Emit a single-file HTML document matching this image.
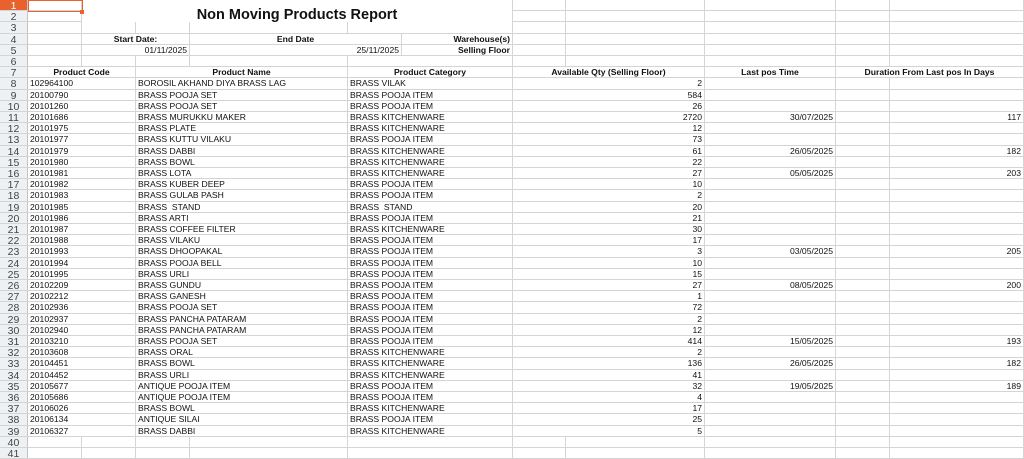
<!DOCTYPE html>
<html><head><meta charset="utf-8"><style>
*{margin:0;padding:0;box-sizing:border-box}
body{width:1024px;height:452px;overflow:hidden;background:#fff;font-family:"Liberation Sans",Arial,sans-serif;font-size:8.6px;color:#111;position:relative}
.row{position:absolute;left:0;width:1024px;height:11.2px;border-bottom:1px solid #d4d4d4}
.c{position:absolute;top:0;height:100%;line-height:11px;white-space:nowrap;overflow:hidden;border-right:1px solid #d4d4d4;padding:0 2px}
.h{left:0;width:28px;background:#eef1f4;color:#444;text-align:center;font-size:10.5px;line-height:12px;border-right:1px solid #c4c4c4}
.r{text-align:right}
.b{font-weight:bold;text-align:center}
</style></head><body>
<div id="g"></div>
<script>
const H=11.2;
const data=[
["102964100","BOROSIL AKHAND DIYA BRASS LAG","BRASS VILAK","2","",""],
["20100790","BRASS POOJA SET","BRASS POOJA ITEM","584","",""],
["20101260","BRASS POOJA SET","BRASS POOJA ITEM","26","",""],
["20101686","BRASS MURUKKU MAKER","BRASS KITCHENWARE","2720","30/07/2025","117"],
["20101975","BRASS PLATE","BRASS KITCHENWARE","12","",""],
["20101977","BRASS KUTTU VILAKU","BRASS POOJA ITEM","73","",""],
["20101979","BRASS DABBI","BRASS KITCHENWARE","61","26/05/2025","182"],
["20101980","BRASS BOWL","BRASS KITCHENWARE","22","",""],
["20101981","BRASS LOTA","BRASS KITCHENWARE","27","05/05/2025","203"],
["20101982","BRASS KUBER DEEP","BRASS POOJA ITEM","10","",""],
["20101983","BRASS GULAB PASH","BRASS POOJA ITEM","2","",""],
["20101985","BRASS&nbsp; STAND","BRASS&nbsp; STAND","20","",""],
["20101986","BRASS ARTI","BRASS POOJA ITEM","21","",""],
["20101987","BRASS COFFEE FILTER","BRASS KITCHENWARE","30","",""],
["20101988","BRASS VILAKU","BRASS POOJA ITEM","17","",""],
["20101993","BRASS DHOOPAKAL","BRASS POOJA ITEM","3","03/05/2025","205"],
["20101994","BRASS POOJA BELL","BRASS POOJA ITEM","10","",""],
["20101995","BRASS URLI","BRASS POOJA ITEM","15","",""],
["20102209","BRASS GUNDU","BRASS POOJA ITEM","27","08/05/2025","200"],
["20102212","BRASS GANESH","BRASS POOJA ITEM","1","",""],
["20102936","BRASS POOJA SET","BRASS POOJA ITEM","72","",""],
["20102937","BRASS PANCHA PATARAM","BRASS POOJA ITEM","2","",""],
["20102940","BRASS PANCHA PATARAM","BRASS POOJA ITEM","12","",""],
["20103210","BRASS POOJA SET","BRASS POOJA ITEM","414","15/05/2025","193"],
["20103608","BRASS ORAL","BRASS KITCHENWARE","2","",""],
["20104451","BRASS BOWL","BRASS KITCHENWARE","136","26/05/2025","182"],
["20104452","BRASS URLI","BRASS KITCHENWARE","41","",""],
["20105677","ANTIQUE POOJA ITEM","BRASS POOJA ITEM","32","19/05/2025","189"],
["20105686","ANTIQUE POOJA ITEM","BRASS POOJA ITEM","4","",""],
["20106026","BRASS BOWL","BRASS KITCHENWARE","17","",""],
["20106134","ANTIQUE SILAI","BRASS POOJA ITEM","25","",""],
["20106327","BRASS DABBI","BRASS KITCHENWARE","5","",""]];
function cell(l,w,t,cls){return `<div class="c ${cls||''}" style="left:${l}px;width:${w}px">${t||''}</div>`}
const blank=[[28,54],[82,54],[136,54],[190,158],[348,165],[513,53],[566,139],[705,131],[836,54],[890,134]];
let out='';
for(let i=1;i<=41;i++){
 let s='';
 if(i==1||i==2){
   s+=cell(28,54,'');
   if(i==1) s+=`<div class="c b" style="left:82px;width:431px;height:22.4px;font-size:14.5px;line-height:16px;padding-top:7px;top:0;background:#fff;z-index:2">Non Moving Products Report</div>`;
   [[513,53],[566,139],[705,131],[836,54],[890,134]].forEach(b=>s+=cell(b[0],b[1],''));
 } else if(i==4||i==5){
   s+=cell(28,54,'');
   s+=cell(82,108,i==4?'Start Date:':'01/11/2025',i==4?'b':'r');
   s+=cell(190,212,i==4?'End Date':'25/11/2025',i==4?'b':'r');
   s+=cell(402,111,i==4?'Warehouse(s)':'Selling Floor','r" style="left:402px;width:111px;font-weight:bold');
   [[513,53],[566,139],[705,131],[836,54],[890,134]].forEach(b=>s+=cell(b[0],b[1],''));
 } else if(i==7){
   s+=cell(28,108,'Product Code','b');s+=cell(136,212,'Product Name','b');s+=cell(348,165,'Product Category','b');
   s+=cell(513,192,'Available Qty (Selling Floor)','b');s+=cell(705,131,'Last pos Time','b');s+=cell(836,188,'Duration From Last pos In Days','b');
 } else if(i>=8&&i<=39){
   const d=data[i-8];
   s+=cell(28,108,d[0]);s+=cell(136,212,d[1]);s+=cell(348,165,d[2]);
   s+=cell(513,192,d[3],'r');s+=cell(705,131,d[4],'r');s+=cell(836,54,'');s+=cell(890,134,d[5],'r');
 } else {
   blank.forEach(b=>s+=cell(b[0],b[1],''));
 }
 let hs=i==1?'background:#e9622d;color:#fff;':'';
 out+=`<div class="row" style="top:${((i-1)*H).toFixed(2)}px;"><div class="c h" style="${hs}">${i}</div>${s}</div>`;
}
out+=`<div style="position:absolute;left:28px;top:0;width:55px;height:12px;border:1.5px solid #e9622d;z-index:3"></div><div style="position:absolute;left:80px;top:10px;width:4px;height:4px;background:#e9622d;z-index:4"></div>`;
document.getElementById('g').innerHTML=out;
</script>
</body></html>
